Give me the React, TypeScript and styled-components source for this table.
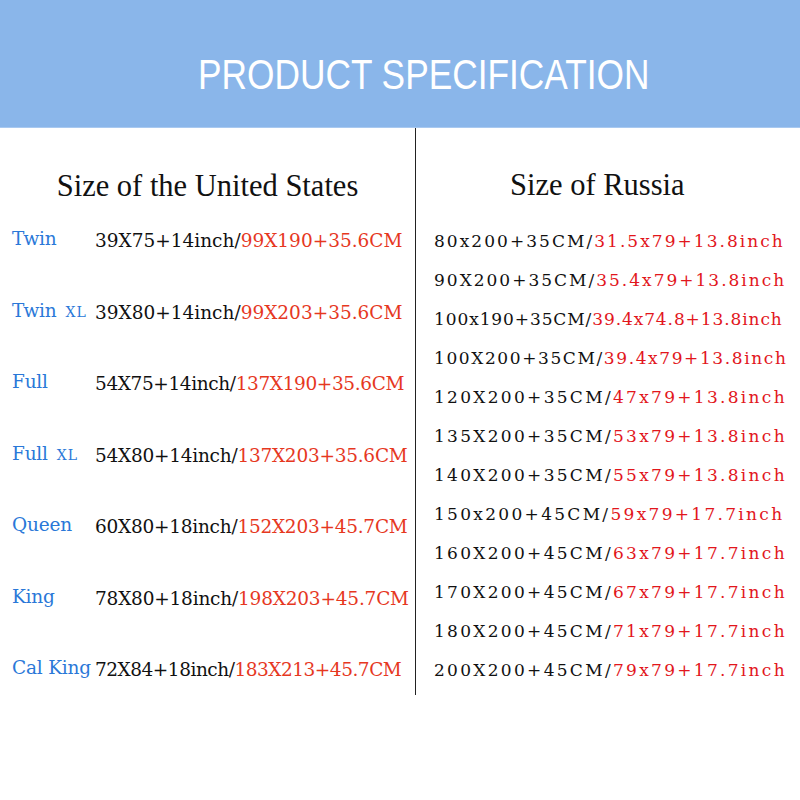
import styled, { createGlobalStyle } from 'styled-components';

const GlobalStyle = createGlobalStyle`
  html, body {
    margin: 0;
    padding: 0;
    background: #ffffff;
  }
`;

// spacing = letter-spacing per row, so each line fills the same width as the artwork
const usSizes = [
  { name: 'Twin', tag: '', inch: '39X75+14inch/', cm: '99X190+35.6CM', spacing: 0 },
  { name: 'Twin', tag: 'XL', inch: '39X80+14inch/', cm: '99X203+35.6CM', spacing: 0 },
  { name: 'Full', tag: '', inch: '54X75+14inch/', cm: '137X190+35.6CM', spacing: -0.38 },
  { name: 'Full', tag: 'XL', inch: '54X80+14inch/', cm: '137X203+35.6CM', spacing: -0.25 },
  { name: 'Queen', tag: '', inch: '60X80+18inch/', cm: '152X203+45.7CM', spacing: -0.25 },
  { name: 'King', tag: '', inch: '78X80+18inch/', cm: '198X203+45.7CM', spacing: -0.2 },
  { name: 'Cal King', tag: '', inch: '72X84+18inch/', cm: '183X213+45.7CM', spacing: -0.48 },
];

const ruSizes = [
  { cm: '80x200+35CM/', inch: '31.5x79+13.8inch', spacing: 2.04 },
  { cm: '90X200+35CM/', inch: '35.4x79+13.8inch', spacing: 2.0 },
  { cm: '100x190+35CM/', inch: '39.4x74.8+13.8inch', spacing: 0.9 },
  { cm: '100X200+35CM/', inch: '39.4x79+13.8inch', spacing: 1.6 },
  { cm: '120X200+35CM/', inch: '47x79+13.8inch', spacing: 2.3 },
  { cm: '135X200+35CM/', inch: '53x79+13.8inch', spacing: 2.3 },
  { cm: '140X200+35CM/', inch: '55x79+13.8inch', spacing: 2.3 },
  { cm: '150x200+45CM/', inch: '59x79+17.7inch', spacing: 2.3 },
  { cm: '160X200+45CM/', inch: '63x79+17.7inch', spacing: 2.3 },
  { cm: '170X200+45CM/', inch: '67x79+17.7inch', spacing: 2.3 },
  { cm: '180X200+45CM/', inch: '71x79+17.7inch', spacing: 2.3 },
  { cm: '200X200+45CM/', inch: '79x79+17.7inch', spacing: 2.3 },
];

const App = () => {
  return (
    <Page>
      <GlobalStyle />
      <Banner>
        <BannerTitle>PRODUCT SPECIFICATION</BannerTitle>
      </Banner>
      <Columns>
        <UsColumn>
          <Heading>Size of the United States</Heading>
          <div>
            {usSizes.map((s, i) => (
              <UsRow key={i}>
                <SizeName>
                  {s.name}
                  {s.tag && <SizeTag>{s.tag}</SizeTag>}
                </SizeName>
                <UsValue $spacing={s.spacing}>
                  {s.inch}
                  <UsRed>{s.cm}</UsRed>
                </UsValue>
              </UsRow>
            ))}
          </div>
        </UsColumn>
        <RuColumn>
          <Heading $indent={94}>Size of Russia</Heading>
          <RuList>
            {ruSizes.map((s, i) => (
              <RuRow key={i} $spacing={s.spacing}>
                {s.cm}
                <RuRed>{s.inch}</RuRed>
              </RuRow>
            ))}
          </RuList>
        </RuColumn>
      </Columns>
    </Page>
  );
};

const Page = styled.div`
  width: 800px;
  height: 800px;
  background: #fff;
  overflow: hidden;
`;

const Banner = styled.div`
  height: 128px;
  box-sizing: border-box;
  background: #8ab6ea;
  border-bottom: 1px solid #a9c9f0;
  display: flex;
  justify-content: center;
  padding: 54px 0 0 48px;
`;

const BannerTitle = styled.h1`
  margin: 0;
  color: #fff;
  font-family: "Liberation Sans", Arial, sans-serif;
  font-weight: 400;
  font-size: 42px;
  line-height: 42px;
  white-space: nowrap;
  transform: scaleX(0.84);
`;

const Columns = styled.div`
  display: grid;
  grid-template-columns: 416px 1fr;
  grid-template-rows: 567px;
`;

const UsColumn = styled.div`
  border-right: 1px solid #222;
  padding-top: 40px;
  overflow: hidden;
`;

const RuColumn = styled.div`
  padding: 39px 0 0 18px;
  overflow: hidden;
`;

const Heading = styled.h2<{ $indent?: number }>`
  margin: 0 0 1px;
  padding-left: ${p => (p.$indent ? `${p.$indent - 18}px` : '0')};
  text-align: ${p => (p.$indent ? 'left' : 'center')};
  font-family: "Liberation Serif", "Times New Roman", serif;
  font-weight: 400;
  font-size: 30.5px;
  line-height: 36px;
  color: #111;
`;

const UsRow = styled.div`
  height: 71.5px;
  display: flex;
  align-items: center;
  padding-left: 12px;
`;

const SizeName = styled.span`
  width: 83px;
  flex: none;
  margin-bottom: 4px;
  font-family: "DejaVu Serif", serif;
  font-size: 18.5px;
  letter-spacing: -0.2px;
  color: #2a78d8;
  white-space: nowrap;
`;

const SizeTag = styled.span`
  font-size: 14px;
  letter-spacing: 1px;
  margin-left: 9px;
`;

const UsValue = styled.span<{ $spacing: number }>`
  font-family: "DejaVu Serif", serif;
  font-size: 18.5px;
  letter-spacing: ${p => p.$spacing}px;
  color: #111;
  white-space: nowrap;
`;

const UsRed = styled.span`
  color: #e6381f;
`;

const RuList = styled.div`
  margin-top: 18px;
`;

const RuRow = styled.div<{ $spacing: number }>`
  height: 39px;
  display: flex;
  align-items: center;
  font-family: "DejaVu Serif", serif;
  font-size: 17px;
  letter-spacing: ${p => p.$spacing}px;
  color: #111;
  white-space: nowrap;
`;

const RuRed = styled.span`
  color: #e2161c;
`;

export default App;
